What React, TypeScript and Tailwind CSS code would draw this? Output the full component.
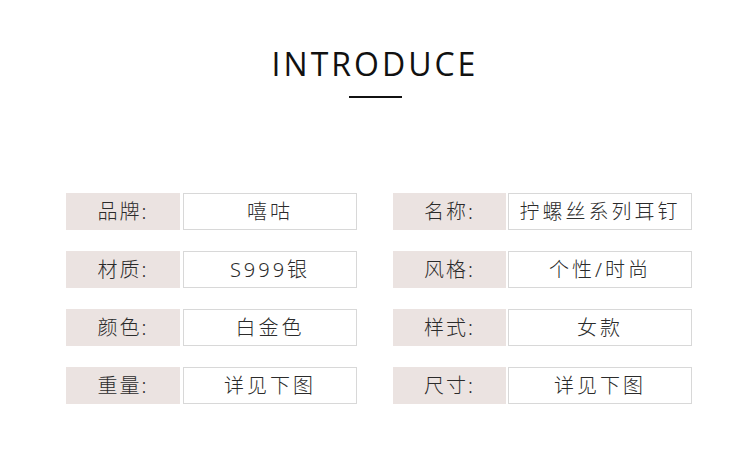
const LEFT = [
  { label: "品牌:", value: "嘻咕" },
  { label: "材质:", value: "S999银" },
  { label: "颜色:", value: "白金色" },
  { label: "重量:", value: "详见下图" },
];

const RIGHT = [
  { label: "名称:", value: "拧螺丝系列耳钉" },
  { label: "风格:", value: "个性/时尚" },
  { label: "样式:", value: "女款" },
  { label: "尺寸:", value: "详见下图" },
];

const CJK = "font-['Noto_Sans','Noto_Sans_CJK_SC',sans-serif]";

function SpecRow({
  label,
  value,
  labelW,
  valueW,
  gap,
}: {
  label: string;
  value: string;
  labelW: string;
  valueW: string;
  gap: string;
}) {
  return (
    <div className={`flex h-[37px] ${gap}`}>
      <div
        className={`${labelW} flex items-center justify-center bg-[#ebe3e1] text-[20px] font-light tracking-[2px] text-[#2b2b2b]`}
      >
        {label}
      </div>
      <div
        className={`${valueW} flex items-center justify-center border border-[#d8d8d8] bg-white text-[20px] font-light tracking-[3px] text-[#2b2b2b]`}
      >
        {value}
      </div>
    </div>
  );
}

export default function App() {
  return (
    <div className={`h-[449px] w-[750px] overflow-hidden bg-white ${CJK}`}>
      <div className="flex flex-col items-center pt-[43px]">
        <h1 className="font-['Open_Sans',sans-serif] text-[32px] leading-[42px] font-normal tracking-[3px] text-[#111]">
          INTRODUCE
        </h1>
        <div className="mt-[11px] h-[2px] w-[53px] bg-[#111]" />
      </div>

      <div className="mt-[95px] flex gap-[36px] pl-[66px]">
        <div className="flex flex-col gap-y-[21px]">
          {LEFT.map((r) => (
            <SpecRow
              key={r.label}
              {...r}
              labelW="w-[114px]"
              valueW="w-[174px]"
              gap="gap-[3px]"
            />
          ))}
        </div>
        <div className="flex flex-col gap-y-[21px]">
          {RIGHT.map((r) => (
            <SpecRow
              key={r.label}
              {...r}
              labelW="w-[113px]"
              valueW="w-[184px]"
              gap="gap-[2px]"
            />
          ))}
        </div>
      </div>
    </div>
  );
}
